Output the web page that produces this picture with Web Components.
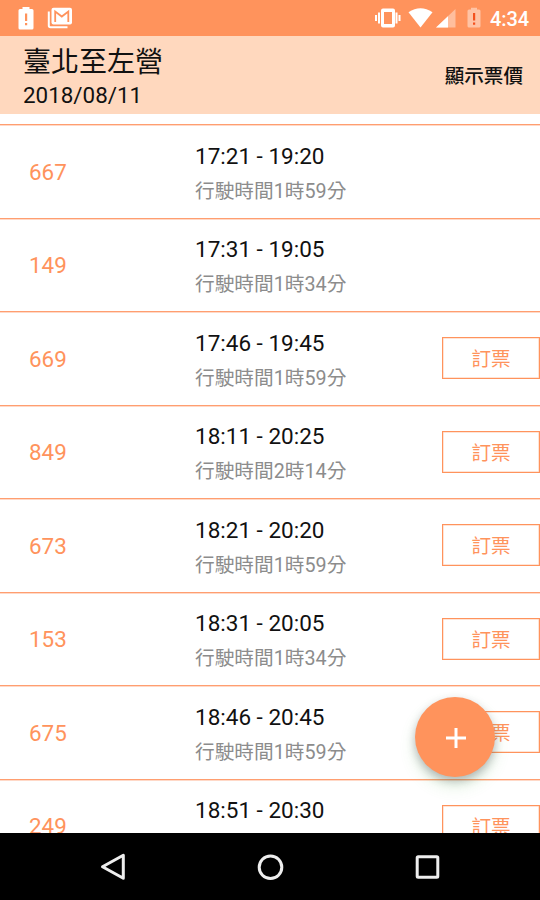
<!DOCTYPE html>
<html lang="zh-Hant">
<head>
<meta charset="utf-8">
<title>臺北至左營</title>
<style>
  :root {
    --primary: #ff935c;
    --primary-light: #ffd8be;
    --muted: #8c8c8c;
  }
  body {
    margin: 0;
    background: #fff;
    color: #111;
    font-family: Roboto, "Noto Sans CJK TC", sans-serif;
  }
</style>
</head>
<body>
<timetable-app></timetable-app>

<script>
class StatusBar extends HTMLElement {
  constructor() {
    super();
    this.attachShadow({ mode: "open" });
    this.shadowRoot.innerHTML = `
      <style>
        :host {
          height: 36px;
          flex: none;
          display: flex;
          align-items: center;
          justify-content: space-between;
          padding: 0 11px 0 18px;
          box-sizing: border-box;
          background: var(--primary);
          color: #fff;
          font-size: 20px;
          font-weight: 500;
          line-height: 36px;
        }
        div { display: flex; align-items: center; height: 36px; }
        svg { display: block; fill: #fff; }
        span { margin-left: 9px; padding-top: 2px; letter-spacing: -0.1px; }
      </style>
      <div>
        <svg width="60" height="36" viewBox="18 0 60 36">
          <path d="M20 9H22.500V7H29.500V9H32Q33.500 9 33.500 10.500V28Q33.500 29.500 32 29.500H20Q18.500 29.500 18.500 28V10.500Q18.500 9 20 9Z"/>
          <path fill="#ff935c" d="M25 13.500h2.200v7.500H25zM25 23h2.200v2.200H25z"/>
          <path fill="none" stroke="#fff" stroke-width="2" d="M48.800 11.500V25.500Q48.800 27.300 50.500 27.300H67.500"/>
          <rect x="51.500" y="7.800" width="20.500" height="16.700" rx="2"/>
          <path fill="none" stroke="#ff935c" stroke-width="1.800" d="M55.200 22V11.500L61.800 16.500L68.300 11.500V22"/>
        </svg>
      </div>
      <div>
        <svg width="107" height="36" viewBox="374 0 107 36">
          <path fill="none" stroke="#fff" stroke-width="2" d="M376 15v6M379 12.500v11M396.500 12.500v11M399.500 15v6"/>
          <path fill-rule="evenodd" d="M383 8.500H393Q395 8.500 395 10.500V25.500Q395 27.500 393 27.500H383Q381 27.500 381 25.500V10.500Q381 8.500 383 8.500ZM384 12V24H392V12Z"/>
          <path d="M408.500 12.200Q420.500 4.200 432.500 12.200L420.500 27.500Z"/>
          <path fill-opacity=".4" d="M455.500 9V27.500H436Z"/>
          <path d="M448 16.200V27.500H436Z"/>
          <path fill-opacity=".45" d="M468 9.500H471V7.800H477V9.500H479Q480.500 9.500 480.500 11V26Q480.500 27.500 479 27.500H469Q467.500 27.500 467.500 26V11Q467.500 9.500 469 9.500Z"/>
          <path fill="#f4511e" d="M473 13h2.200v7.500H473zM473 22.500h2.200v2.200H473z"/>
        </svg>
        <span>4:34</span>
      </div>
    `;
  }
}

class RouteHeader extends HTMLElement {
  constructor() {
    super();
    this.attachShadow({ mode: "open" });
    this.shadowRoot.innerHTML = `
      <style>
        :host {
          height: 78px;
          flex: none;
          display: flex;
          align-items: center;
          justify-content: space-between;
          padding: 0 17px 0 23px;
          box-sizing: border-box;
          background: var(--primary-light);
        }
        .title { font-size: 28px; line-height: 36px; height: 35px; padding-top: 9px; }
        .date { font-size: 22.4px; line-height: 30px; height: 34px; }
        .action { font-size: 19.6px; font-weight: 500; line-height: 30px; padding-top: 4px; }
      </style>
      <div>
        <div class="title"><slot></slot></div>
        <div class="date"><slot name="date"></slot></div>
      </div>
      <div class="action"><slot name="action"></slot></div>
    `;
  }
}

class TrainRow extends HTMLElement {
  constructor() {
    super();
    this.attachShadow({ mode: "open" });
    this.shadowRoot.innerHTML = `
      <style>
        :host {
          height: 93.5px;
          flex: none;
          display: grid;
          grid-template-columns: 166px 1fr auto;
          align-items: center;
          padding-left: 29px;
          box-sizing: border-box;
          border-top: 1px solid #ff9e70;
          box-shadow: 0 1px 0 #ffd9c8 inset;
        }
        .number { font-size: 22.4px; line-height: 30px; color: var(--primary); padding-top: 1px; }
        .time { font-size: 22.5px; line-height: 36px; height: 37px; padding-top: 4px; }
        .duration { font-size: 19.7px; line-height: 34px; height: 34px; color: var(--muted); }
        .book {
          display: none;
          width: 98px;
          height: 42px;
          box-sizing: border-box;
          border: 1px solid var(--primary);
          box-shadow: 0 0 0 0.5px #ffc9ae inset;
          color: var(--primary);
          font-size: 19.6px;
          line-height: 43px;
          text-align: center;
        }
        :host([bookable]) .book { display: block; }
      </style>
      <div class="number"></div>
      <div>
        <div class="time"></div>
        <div class="duration"></div>
      </div>
      <div class="book">訂票</div>
    `;
  }

  static get observedAttributes() {
    return ["number", "time", "duration"];
  }

  attributeChangedCallback(name, oldValue, newValue) {
    this.shadowRoot.querySelector("." + name).textContent = newValue;
  }
}

class AddButton extends HTMLElement {
  constructor() {
    super();
    this.attachShadow({ mode: "open" });
    this.shadowRoot.innerHTML = `
      <style>
        :host {
          display: flex;
          align-items: center;
          justify-content: center;
          width: 80px;
          height: 80px;
          border-radius: 50%;
          background: var(--primary);
          box-shadow: 0 4px 8px rgba(70, 60, 90, 0.32), 0 9px 16px rgba(90, 180, 80, 0.2);
        }
      </style>
      <svg width="22" height="22" viewBox="0 0 22 22"><path d="M12 2V22M2 12H22" stroke="#fff" stroke-width="3"/></svg>
    `;
  }
}

class NavBar extends HTMLElement {
  constructor() {
    super();
    this.attachShadow({ mode: "open" });
    this.shadowRoot.innerHTML = `
      <style>
        :host {
          height: 67px;
          flex: none;
          display: flex;
          align-items: center;
          justify-content: space-between;
          padding: 0 98px;
          box-sizing: border-box;
          background: #000;
        }
        svg { fill: none; stroke: #eee; stroke-width: 3; stroke-linejoin: round; }
      </style>
      <svg width="30" height="30" viewBox="0 0 30 30"><path d="M25.300 3.300V26.300L4.500 14.800Z"/></svg>
      <svg width="30" height="30" viewBox="0 0 30 30"><circle cx="15.500" cy="15.300" r="11.300"/></svg>
      <svg width="30" height="30" viewBox="0 0 30 30"><rect x="5.200" y="4.700" width="20.600" height="20.600" rx="1"/></svg>
    `;
  }
}

class TimetableApp extends HTMLElement {
  constructor() {
    super();
    this.attachShadow({ mode: "open" });
    this.shadowRoot.innerHTML = `
      <style>
        :host {
          position: relative;
          display: flex;
          flex-direction: column;
          width: 540px;
          height: 900px;
          overflow: hidden;
        }
        .list {
          flex: 1;
          min-height: 0;
          display: flex;
          flex-direction: column;
          padding-top: 10px;
          overflow: hidden;
        }
        add-button { position: absolute; right: 45px; bottom: 123px; }
      </style>
      <status-bar></status-bar>
      <route-header>
        臺北至左營
        <span slot="date">2018/08/11</span>
        <span slot="action">顯示票價</span>
      </route-header>
      <div class="list">
        <train-row number="667" time="17:21 - 19:20" duration="行駛時間1時59分"></train-row>
        <train-row number="149" time="17:31 - 19:05" duration="行駛時間1時34分"></train-row>
        <train-row number="669" time="17:46 - 19:45" duration="行駛時間1時59分" bookable></train-row>
        <train-row number="849" time="18:11 - 20:25" duration="行駛時間2時14分" bookable></train-row>
        <train-row number="673" time="18:21 - 20:20" duration="行駛時間1時59分" bookable></train-row>
        <train-row number="153" time="18:31 - 20:05" duration="行駛時間1時34分" bookable></train-row>
        <train-row number="675" time="18:46 - 20:45" duration="行駛時間1時59分" bookable></train-row>
        <train-row number="249" time="18:51 - 20:30" bookable></train-row>
      </div>
      <add-button></add-button>
      <nav-bar></nav-bar>
    `;
  }
}

customElements.define("status-bar", StatusBar);
customElements.define("route-header", RouteHeader);
customElements.define("train-row", TrainRow);
customElements.define("add-button", AddButton);
customElements.define("nav-bar", NavBar);
customElements.define("timetable-app", TimetableApp);
</script>
</body>
</html>
